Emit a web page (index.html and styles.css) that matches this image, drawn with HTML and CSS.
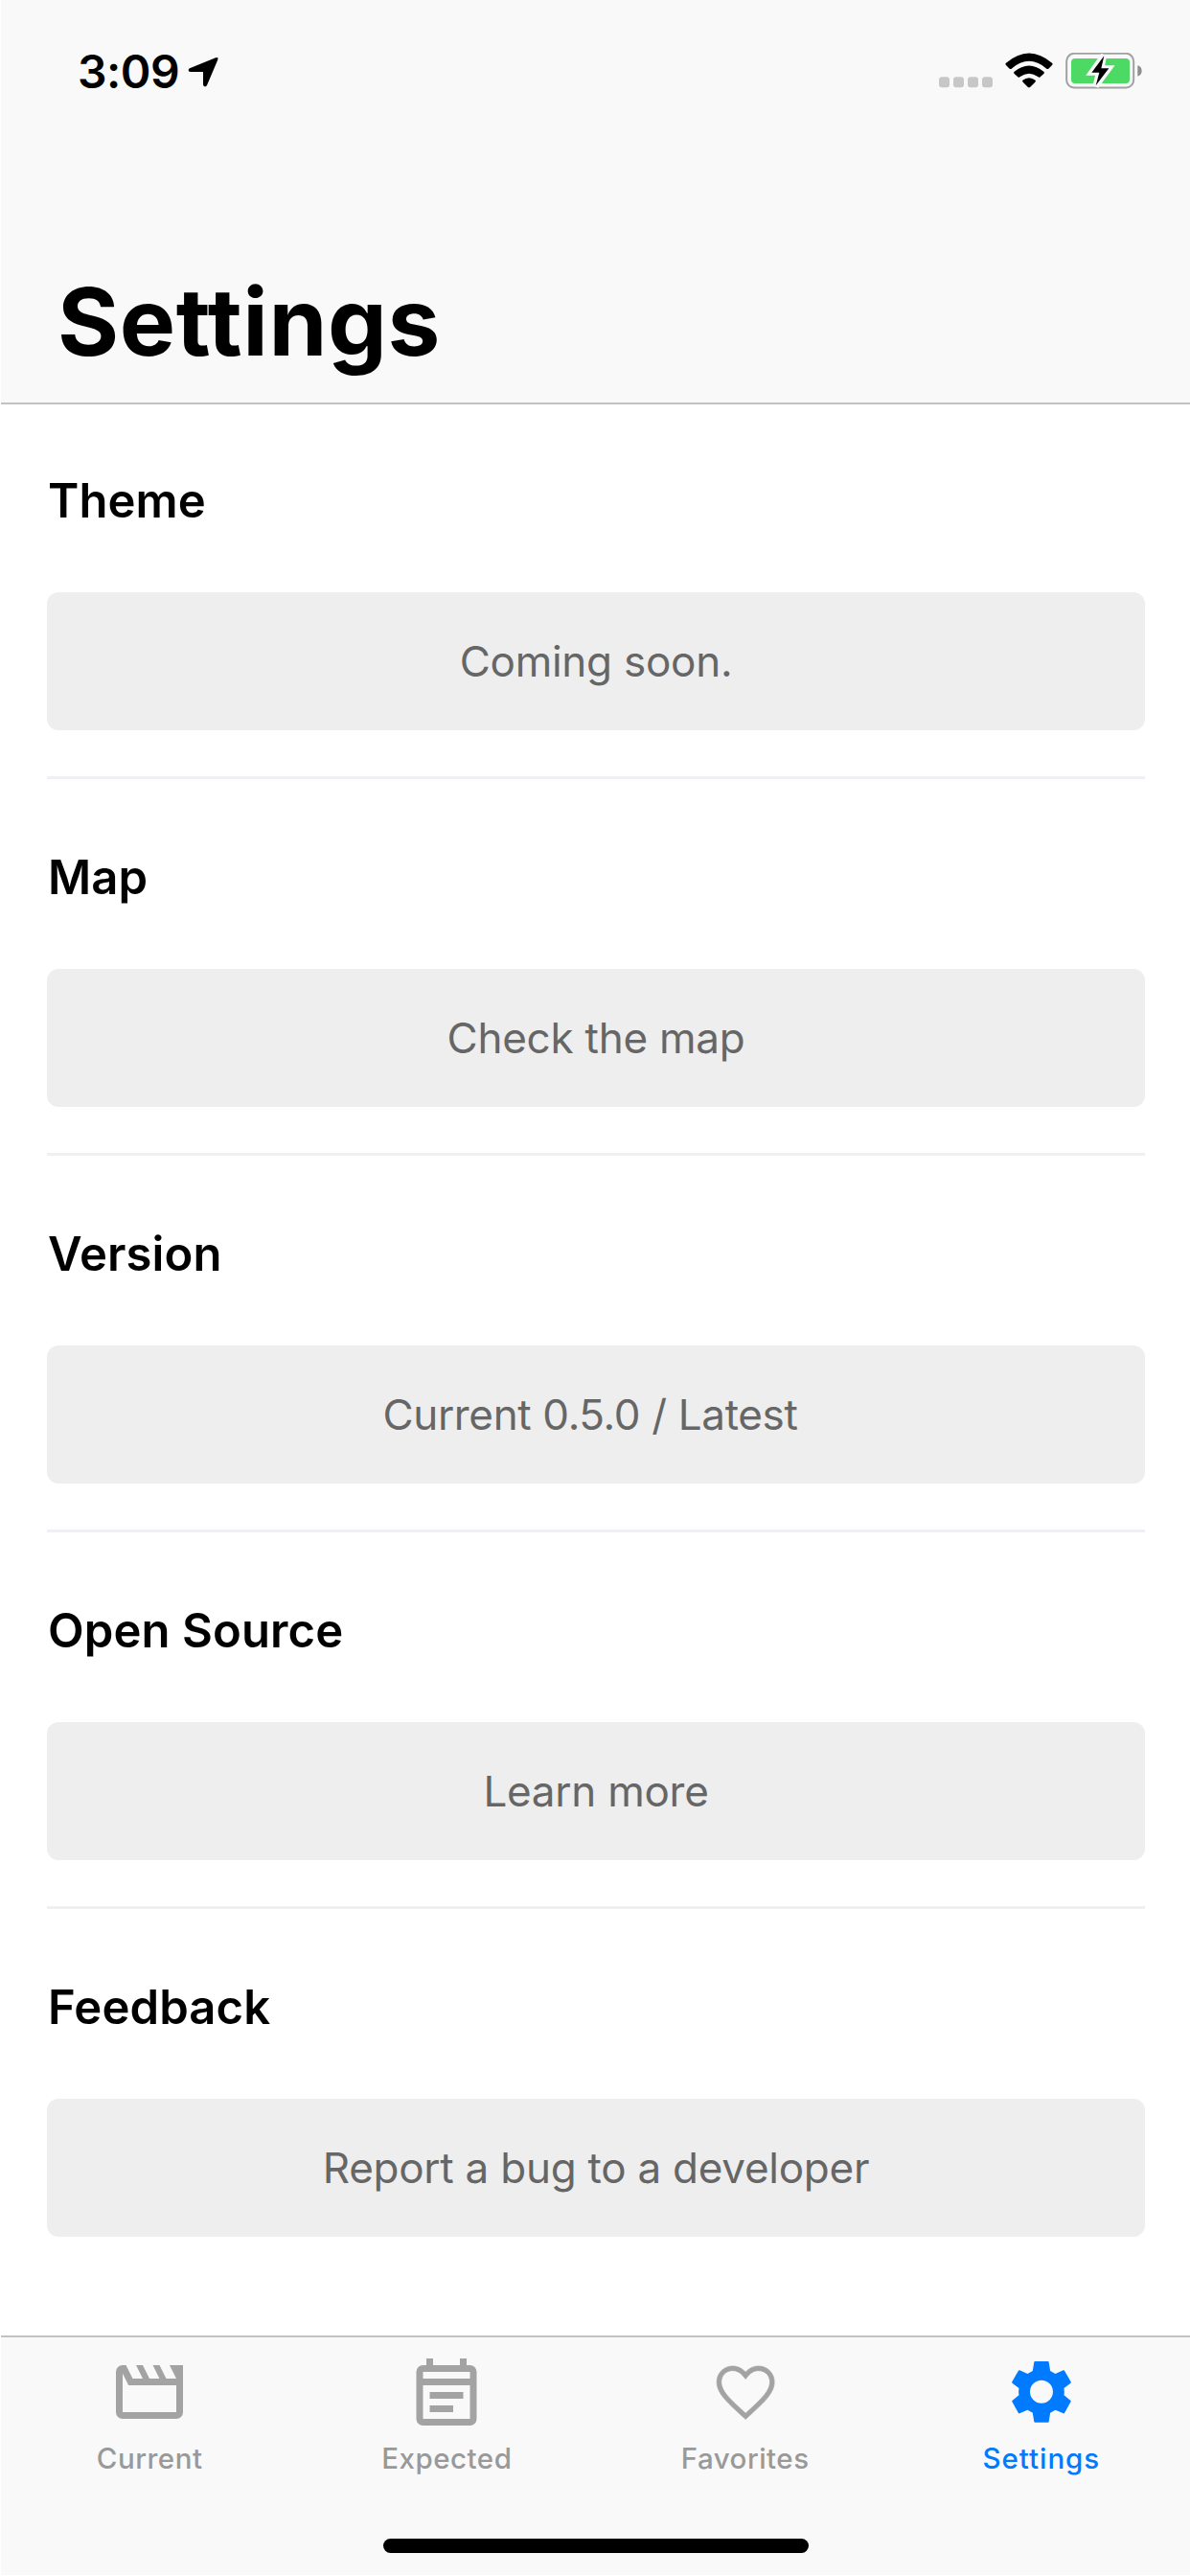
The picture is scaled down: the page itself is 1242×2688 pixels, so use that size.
FILE: index.html
```
<!DOCTYPE html>
<html lang="en">
<head>
<meta charset="utf-8">
<title>Settings</title>
<link rel="stylesheet" href="styles.css">
</head>
<body>
<div class="screen">
  <header class="header">
    <div class="status">
      <div class="status-left">
        <span class="time">3:09</span>
        <svg class="location" viewBox="411 86 99 96"><path d="M417 123 498 90Q508 86 505 96L471 176Q468 181 464 180Q459 179 459 174V134H419Q413 134 413 129Q413 125 417 123Z"/></svg>
      </div>
      <div class="status-right">
        <svg class="signal" viewBox="60 76 168 114" fill="#c7c7c7"><rect x="60" y="152" width="33" height="33" rx="9"/><rect x="105" y="152" width="33" height="33" rx="9"/><rect x="150" y="152" width="33" height="33" rx="9"/><rect x="195" y="152" width="33" height="33" rx="9"/></svg>
        <svg class="wifi" viewBox="267 76 150 114"><path d="M269 109Q267 112 270 115L281 126Q284 128 287 126Q342 79 397 126Q400 128 403 126L414 115Q417 112 415 109Q342 46 269 109Z"/><path d="M295 136Q293 139 296 142L307 152Q310 155 313 152Q342 131 371 152Q374 155 377 152L388 142Q391 139 389 136Q342 97 295 136Z"/><path d="M322 162Q320 165 323 168L338 183Q342 187 346 183L361 168Q364 165 362 162Q342 147 322 162Z"/></svg>
        <svg class="battery" viewBox="456 76 240 114">
          <rect x="459.500" y="78.500" width="210" height="107" rx="24" fill="none" stroke="#a1a1a1" stroke-width="6"/>
          <path d="M682 116Q695 120 695 133T682 150Z" fill="#8e8e8e"/>
          <rect x="474" y="94" width="183" height="78" rx="12" fill="#4cd964"/>
          <path d="M576 84 538 138H561L551 181 592 125H568Z" fill="#000" stroke="#f9f9f9" stroke-width="19"/>
          <path d="M577 86 538 138H562L551 179 592 125H568Z"/>
        </svg>
      </div>
    </div>
    <h1 class="title">Settings</h1>
  </header>

  <main class="content">
    <section class="section">
      <h2 class="heading">Theme</h2>
      <button class="action">Coming soon.</button>
    </section>
    <section class="section">
      <h2 class="heading">Map</h2>
      <button class="action">Check the map</button>
    </section>
    <section class="section">
      <h2 class="heading">Version</h2>
      <button class="action version">Current 0.5.0 / Latest </button>
    </section>
    <section class="section">
      <h2 class="heading">Open Source</h2>
      <button class="action">Learn more</button>
    </section>
    <section class="section">
      <h2 class="heading">Feedback</h2>
      <button class="action">Report a bug to a developer</button>
    </section>
  </main>

  <footer class="footer">
    <nav class="tabs">
      <a class="tab">
        <svg class="icon" viewBox="0 0 24 24"><path d="M5.760 10 4 6.470V18H20V10M22 4V18A2 2 0 0 1 20 20H4A2 2 0 0 1 2 18V6A2 2 0 0 1 4 4H5L7 8H10L8 4H10L12 8H15L13 4H15L17 8H20L18 4H22Z"/></svg>
        <span class="label">Current</span>
      </a>
      <a class="tab">
        <svg class="icon" viewBox="0 0 24 24"><path d="M19 4H18V2H16V4H8V2H6V4H5A2 2 0 0 0 3 6V20A2 2 0 0 0 5 22H19A2 2 0 0 0 21 20V6A2 2 0 0 0 19 4M19 20H5V10H19V20M19 8H5V6H19V8M7 12H17V14H7M7 16H14V18H7"/></svg>
        <span class="label">Expected</span>
      </a>
      <a class="tab">
        <svg class="icon heart" viewBox="-43 -40 582 582"><path d="M349.600 64c-36.400 0-70.700 16.700-93.600 43.900C233.100 80.700 198.800 64 162.400 64 97.900 64 48 114.200 48 179.100c0 79.500 70.700 143.300 177.800 241.700L256 448l30.200-27.200C393.300 322.400 464 258.600 464 179.100 464 114.200 414.100 64 349.600 64zm-80.800 329l-4.200 3.900-8.600 7.800-8.600-7.800-4.200-3.900c-50.400-46.300-94-86.300-122.700-122-28-34.700-40.400-63.100-40.400-91.900 0-22.900 8.400-43.900 23.700-59.300 15.200-15.400 36-23.800 58.600-23.800 26.100 0 52 12.200 69.100 32.500l24.500 29.100 24.500-29.100c17.100-20.400 43-32.500 69.100-32.500 22.600 0 43.400 8.400 58.700 23.800 15.300 15.400 23.700 36.500 23.700 59.300 0 28.800-12.500 57.200-40.400 91.900-28.800 35.700-72.300 75.700-122.800 122z"/></svg>
        <span class="label favorites">Favorites</span>
      </a>
      <a class="tab active">
        <svg class="icon" viewBox="14.600 12 252 252"><path fill-rule="evenodd" d="M120 42H161Q163 42 163.500 44L168 72 184 81 209 70Q211 69 212.500 71L232.500 106Q233.500 108 232 110L211 126Q213 137 211 148L232 165Q233.500 166 232.500 168L212.500 204Q211 206 209 205L184 194 168 203 163.500 231Q163 233 161 233H120Q118 233 117.500 231L113 203 97 194 72 205Q70 206 68.500 204L48.500 168Q47.500 166 49 165L70 148Q68 137 70 126L49 110Q47.500 108 48.500 106L68.500 71Q70 69 72 70L97 81 113 72 117.500 44Q118 42 120 42ZM140.500 101.500a36 36 0 1 0 0 72a36 36 0 1 0 0-72Z"/></svg>
        <span class="label">Settings</span>
      </a>
    </nav>
    <div class="home-indicator"></div>
  </footer>
</div>
</body>
</html>
```
FILE: styles.css
```
* {
  box-sizing: border-box;
}

body {
  margin: 0;
  background: #fff;
  color: #000;
  font-family: Inter, "Liberation Sans", sans-serif;
}

svg {
  display: block;
}

.screen {
  display: flex;
  flex-direction: column;
  height: 2688px;
  padding: 0 0 1px 1px;
}

.header {
  height: 422px;
  padding: 44px 50px 0 62px;
  background: #f9f9f9;
  border-bottom: 2px solid #c2c2c2;
}

.status {
  display: flex;
  justify-content: space-between;
  height: 60px;
}

.status-left {
  display: flex;
  padding-left: 18px;
}

.time {
  width: 115px;
  font-size: 48px;
  font-weight: 600;
  line-height: 61px;
  letter-spacing: -0.5px;
}

.location {
  width: 33px;
  height: 32px;
  margin-top: 15px;
}

.status-right {
  display: flex;
  gap: 13px;
  padding-top: 11px;
}

.signal {
  width: 56px;
  height: 38px;
}

.wifi {
  width: 50px;
  height: 38px;
}

.battery {
  width: 80px;
  height: 38px;
}

.title {
  margin: 172px 0 0 -3px;
  font-size: 98px;
  font-weight: 700;
  line-height: 120px;
  letter-spacing: 0.6px;
}

.content {
  flex: 1;
  padding: 0 47px 0 48px;
  margin-top: -2px;
}

.section {
  padding: 72px 0 48px;
  border-bottom: 3px solid #efeff4;
}

.section:last-child {
  border-bottom: 0;
}

.heading {
  margin: 0 0 65px 1px;
  font-size: 49px;
  font-weight: 600;
  line-height: 61px;
  letter-spacing: 0.1px;
}

.action {
  display: block;
  width: 100%;
  height: 144px;
  padding: 0;
  border: 0;
  border-radius: 12px;
  background: #eee;
  color: #666;
  font-family: inherit;
  font-size: 44px;
  letter-spacing: -0.25px;
  text-align: center;
  white-space: pre;
}

.version {
  letter-spacing: -0.35px;
}

.footer {
  height: 250px;
  border-top: 2px solid #c2c2c2;
  background: #f9f9f9;
}

.tabs {
  display: grid;
  grid-template-columns: repeat(4, 1fr);
  height: 210px;
  padding-top: 15px;
}

.tab {
  display: flex;
  flex-direction: column;
  align-items: center;
  gap: 9px;
  color: #999;
}

.icon {
  width: 84px;
  height: 84px;
  fill: #a3a3a3;
}

.heart {
  stroke: #a3a3a3;
  stroke-width: 5;
}

.label {
  font-size: 29.5px;
  font-weight: 500;
  line-height: 36px;
  letter-spacing: 0.5px;
}

.favorites {
  padding-left: 2px;
}

.active {
  color: #007aff;
}

.active .icon {
  fill: #007aff;
}

.active .label {
  letter-spacing: 0.95px;
}

.home-indicator {
  width: 444px;
  height: 15px;
  margin: 0 auto;
  border-radius: 8px;
  background: #000;
}
```
